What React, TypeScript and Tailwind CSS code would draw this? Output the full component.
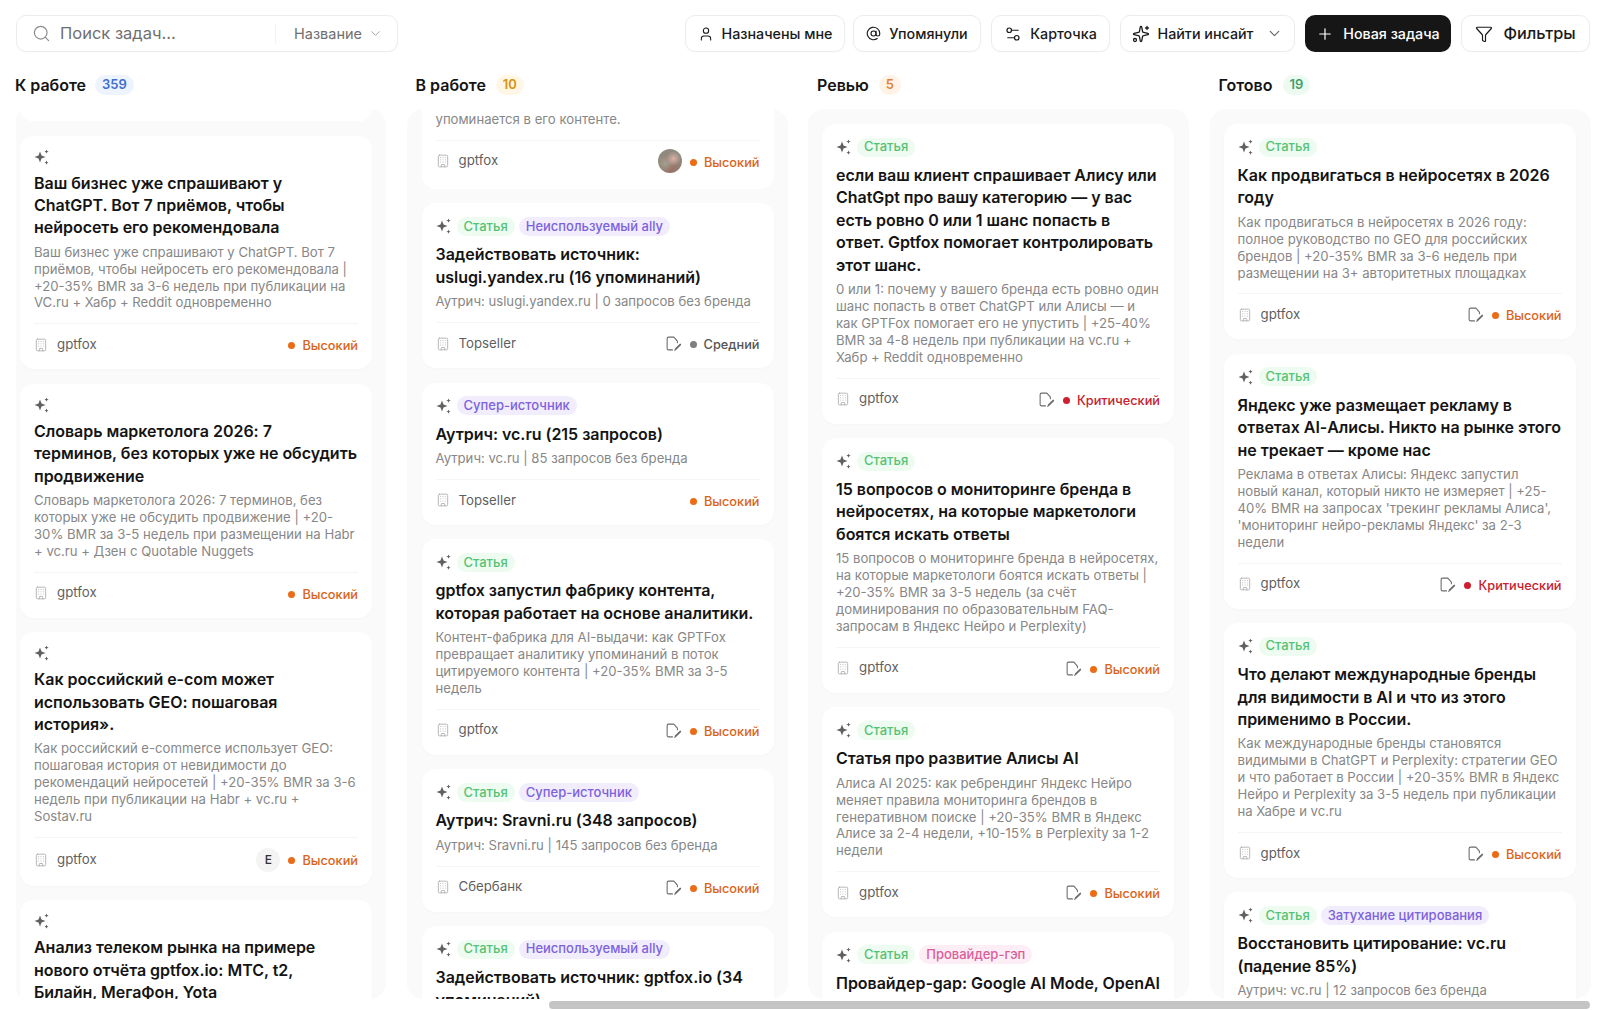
import React from "react";
import { Search, ChevronDown, User, AtSign, Settings2, Sparkles, Plus, Funnel, Building } from "lucide-react";

type P = "h" | "m" | "c";
type Tag = { t: string; k: "g" | "v" | "p" };
type CardT = {
  tags?: Tag[];
  title: string;
  desc: string;
  client: string;
  p: P;
  file?: boolean;
  avatar?: "e" | "photo";
};

const S: Tag = { t: "Статья", k: "g" };

const Spark = () => (
  <svg width="17" height="18" viewBox="1.5 0 17 18" className="shrink-0" fill="#606060">
    <path d="M7.5 3.6 L9 7.6 L13 9.1 L9 10.6 L7.5 14.6 L6 10.6 L2 9.1 L6 7.6 Z" />
    <path d="M14 1.4 L14.6 3 L16.2 3.6 L14.6 4.2 L14 5.8 L13.4 4.2 L11.8 3.6 L13.4 3 Z" />
    <path d="M14 12.6 L14.6 14.1 L16 14.7 L14.6 15.3 L14 16.8 L13.4 15.3 L12 14.7 L13.4 14.1 Z" />
  </svg>
);

const FileEdit = () => (
  <svg width="17" height="17" viewBox="0 0 24 24" fill="none" stroke="#6a6a6a" strokeWidth="1.5" strokeLinecap="round" strokeLinejoin="round" className="shrink-0">
    <path d="M10.5 21H5a2 2 0 0 1-2-2V5a2 2 0 0 1 2-2h7.5l5 5.5V11" />
    <path d="M21.5 13.5 15 20" strokeWidth="2.6" />
    <path d="M13.5 21.5h.5" strokeWidth="1.5" />
  </svg>
);

const tagCls = {
  g: "bg-[#edfbf0] text-[#55c274]",
  v: "bg-[#f1edfd] text-[#7d62dc]",
  p: "bg-[#fdeef5] text-[#d95f9b]",
};

function Pill({ tag }: { tag: Tag }) {
  return (
    <span className={`h-[19px] rounded-full px-[7px] flex items-center text-[13px] font-medium whitespace-nowrap ${tagCls[tag.k]}`}>
      {tag.t}
    </span>
  );
}

function Priority({ p }: { p: P }) {
  const dot = p === "h" ? "bg-[#ea6c17]" : p === "c" ? "bg-[#cf1f2e]" : "bg-[#7f7f7f]";
  const txt = p === "h" ? "text-[#d9651a]" : p === "c" ? "text-[#c5222f]" : "text-[#555555]";
  const label = p === "h" ? "Высокий" : p === "c" ? "Критический" : "Средний";
  return (
    <span className="flex items-center gap-[7px] mt-[2px]">
      <span className={`w-[7px] h-[7px] rounded-full ${dot}`} />
      <span className={`text-[12.75px] font-medium ${txt}`}>{label}</span>
    </span>
  );
}

function Footer({ c }: { c: Pick<CardT, "client" | "p" | "file" | "avatar"> }) {
  return (
    <div className={`mt-[12px] border-t border-[#f5f5f5] pt-[11px] flex items-center justify-between ${c.avatar === "e" ? "h-[34px]" : "h-[31px]"}`}>
      <span className="flex items-center gap-[9px] text-[13.25px] text-[#5f5f5f]">
        <Building size={14} strokeWidth={1.4} className="text-[#a8a8a8]" />
        {c.client}
      </span>
      <span className="flex items-center gap-[8px]">
        {c.file && <FileEdit />}
        {c.avatar === "e" && (
          <span className="w-[24px] h-[24px] rounded-full bg-[#f4f4f4] flex items-center justify-center text-[12px] font-medium text-[#333333]">E</span>
        )}
        {c.avatar === "photo" && (
          <span className="w-[24px] h-[24px] rounded-full bg-[radial-gradient(circle_at_65%_40%,#d9b3a6_0%,transparent_35%),radial-gradient(circle_at_30%_60%,#a3a08f_0%,transparent_40%),radial-gradient(circle_at_50%_85%,#9a6f63_0%,#8f8a7e_70%)]" />
        )}
        <Priority p={c.p} />
      </span>
    </div>
  );
}

function Card({ c }: { c: CardT }) {
  return (
    <div className="bg-white rounded-[14px] shadow-[0_1px_3px_rgba(0,0,0,0.025)] px-[14px] pt-[11px] pb-[15px] shrink-0">
      <div className={`flex items-center gap-[4px] ${c.tags ? "h-[24px]" : "h-[20px]"}`}>
        <Spark />
        {c.tags?.map((t) => <Pill key={t.t} tag={t} />)}
      </div>
      <h3 className="mt-[5px] text-[16px] leading-[22.4px] tracking-[-0.03px] font-semibold text-[#141414]">{c.title}</h3>
      {c.desc && <p className="mt-[5px] text-[13.15px] leading-[16.9px] text-[#878787]">{c.desc}</p>}
      <Footer c={c} />
    </div>
  );
}

const col1: CardT[] = [
  { title: "Ваш бизнес уже спрашивают у ChatGPT. Вот 7 приёмов, чтобы нейросеть его рекомендовала", desc: "Ваш бизнес уже спрашивают у ChatGPT. Вот 7 приёмов, чтобы нейросеть его рекомендовала | +20-35% BMR за 3-6 недель при публикации на VC.ru + Хабр + Reddit одновременно", client: "gptfox", p: "h" },
  { title: "Словарь маркетолога 2026: 7 терминов, без которых уже не обсудить продвижение", desc: "Словарь маркетолога 2026: 7 терминов, без которых уже не обсудить продвижение | +20-30% BMR за 3-5 недель при размещении на Habr + vc.ru + Дзен с Quotable Nuggets", client: "gptfox", p: "h" },
  { title: "Как российский e-com может использовать GEO: пошаговая история».", desc: "Как российский e-commerce использует GEO: пошаговая история от невидимости до рекомендаций нейросетей | +20-35% BMR за 3-6 недель при публикации на Habr + vc.ru + Sostav.ru", client: "gptfox", p: "h", avatar: "e" },
  { title: "Анализ телеком рынка на примере нового отчёта gptfox.io: МТС, t2, Билайн, МегаФон, Yota", desc: "", client: "gptfox", p: "h" },
];

const col2: CardT[] = [
  { tags: [S, { t: "Неиспользуемый ally", k: "v" }], title: "Задействовать источник: uslugi.yandex.ru (16 упоминаний)", desc: "Аутрич: uslugi.yandex.ru | 0 запросов без бренда", client: "Topseller", p: "m", file: true },
  { tags: [{ t: "Супер-источник", k: "v" }], title: "Аутрич: vc.ru (215 запросов)", desc: "Аутрич: vc.ru | 85 запросов без бренда", client: "Topseller", p: "h" },
  { tags: [S], title: "gptfox запустил фабрику контента, которая работает на основе аналитики.", desc: "Контент-фабрика для AI-выдачи: как GPTFox превращает аналитику упоминаний в поток цитируемого контента | +20-35% BMR за 3-5 недель", client: "gptfox", p: "h", file: true },
  { tags: [S, { t: "Супер-источник", k: "v" }], title: "Аутрич: Sravni.ru (348 запросов)", desc: "Аутрич: Sravni.ru | 145 запросов без бренда", client: "Сбербанк", p: "h", file: true },
  { tags: [S, { t: "Неиспользуемый ally", k: "v" }], title: "Задействовать источник: gptfox.io (34 упоминаний)", desc: "", client: "gptfox", p: "h", file: true },
];

const col3: CardT[] = [
  { tags: [S], title: "если ваш клиент спрашивает Алису или ChatGpt про вашу категорию — у вас есть ровно 0 или 1 шанс попасть в ответ. Gptfox помогает контролировать этот шанс.", desc: "0 или 1: почему у вашего бренда есть ровно один шанс попасть в ответ ChatGPT или Алисы — и как GPTFox помогает его не упустить | +25-40% BMR за 4-8 недель при публикации на vc.ru + Хабр + Reddit одновременно", client: "gptfox", p: "c", file: true },
  { tags: [S], title: "15 вопросов о мониторинге бренда в нейросетях, на которые маркетологи боятся искать ответы", desc: "15 вопросов о мониторинге бренда в нейросетях, на которые маркетологи боятся искать ответы | +20-35% BMR за 3-5 недель (за счёт доминирования по образовательным FAQ-запросам в Яндекс Нейро и Perplexity)", client: "gptfox", p: "h", file: true },
  { tags: [S], title: "Статья про развитие Алисы AI", desc: "Алиса AI 2025: как ребрендинг Яндекс Нейро меняет правила мониторинга брендов в генеративном поиске | +20-35% BMR в Яндекс Алисе за 2-4 недели, +10-15% в Perplexity за 1-2 недели", client: "gptfox", p: "h", file: true },
  { tags: [S, { t: "Провайдер-гэп", k: "p" }], title: "Провайдер-gap: Google AI Mode, OpenAI", desc: "", client: "gptfox", p: "h" },
];

const col4: CardT[] = [
  { tags: [S], title: "Как продвигаться в нейросетях в 2026 году", desc: "Как продвигаться в нейросетях в 2026 году: полное руководство по GEO для российских брендов | +20-35% BMR за 3-6 недель при размещении на 3+ авторитетных площадках", client: "gptfox", p: "h", file: true },
  { tags: [S], title: "Яндекс уже размещает рекламу в ответах AI-Алисы. Никто на рынке этого не трекает — кроме нас", desc: "Реклама в ответах Алисы: Яндекс запустил новый канал, который никто не измеряет | +25-40% BMR на запросах 'трекинг рекламы Алиса', 'мониторинг нейро-рекламы Яндекс' за 2-3 недели", client: "gptfox", p: "c", file: true },
  { tags: [S], title: "Что делают международные бренды для видимости в AI и что из этого применимо в России.", desc: "Как международные бренды становятся видимыми в ChatGPT и Perplexity: стратегии GEO и что работает в России | +20-35% BMR в Яндекс Нейро и Perplexity за 3-5 недель при публикации на Хабре и vc.ru", client: "gptfox", p: "h", file: true },
  { tags: [S, { t: "Затухание цитирования", k: "v" }], title: "Восстановить цитирование: vc.ru (падение 85%)", desc: "Аутрич: vc.ru | 12 запросов без бренда", client: "gptfox", p: "h" },
];

function Btn({ children, cls }: { children: React.ReactNode; cls: string }) {
  return (
    <button className={`h-[37px] rounded-[10px] border border-[#ececec] bg-white flex items-center justify-center font-medium text-[#1a1a1a] shadow-[0_1px_2px_rgba(0,0,0,0.02)] ${cls}`}>
      {children}
    </button>
  );
}

function Head({ title, n, cls }: { title: string; n: number; cls: string }) {
  return (
    <div className="h-[34px] flex items-start gap-[9px] shrink-0">
      <span className="text-[16px] leading-[20px] font-semibold text-[#141414]">{title}</span>
      <span className={`h-[20px] rounded-full px-[7px] flex items-center text-[13px] font-semibold ${cls}`}>{n}</span>
    </div>
  );
}

export default function App() {
  return (
    <div className="w-[1600px] h-[1010px] overflow-hidden bg-white font-['Inter','Noto_Sans',sans-serif]">
      <header className="flex items-center justify-between pl-[16px] pr-[10px] pt-[15px] h-[52px]">
        <div className="w-[382px] h-[37px] rounded-[10px] border border-[#ececec] bg-white flex items-center pl-[15px] pr-[14px] shadow-[0_1px_2px_rgba(0,0,0,0.02)]">
          <Search size={19} strokeWidth={1.5} className="text-[#8d8d8d]" />
          <span className="ml-[9px] text-[16.5px] text-[#6f6f6f]">Поиск задач...</span>
          <span className="ml-auto w-px h-[20px] bg-[#f3f3f3]" />
          <span className="ml-[18px] text-[14.5px] text-[#6f6f6f]">Название</span>
          <ChevronDown size={15} strokeWidth={1.5} className="ml-[6px] text-[#a0a0a0]" />
        </div>
        <div className="flex items-center">
          <Btn cls="w-[160px] gap-[8px] text-[14.3px]"><User size={16} strokeWidth={1.6} />Назначены мне</Btn>
          <Btn cls="w-[128px] ml-[8px] gap-[8px] text-[14.3px]"><AtSign size={15} strokeWidth={1.8} />Упомянули</Btn>
          <Btn cls="w-[119px] ml-[10px] gap-[8px] text-[14.3px]"><Settings2 size={18} strokeWidth={1.6} />Карточка</Btn>
          <Btn cls="w-[175px] ml-[10px] gap-[7px] text-[14.3px]"><Sparkles size={18} strokeWidth={1.7} />Найти инсайт<ChevronDown size={17} strokeWidth={1.6} className="ml-[5px] text-[#666666]" /></Btn>
          <button className="w-[146px] ml-[10px] h-[37px] rounded-[10px] bg-[#161616] text-white flex items-center justify-center gap-[9px] text-[14.3px] font-medium">
            <Plus size={18} strokeWidth={1.6} />Новая задача
          </button>
          <Btn cls="w-[129px] ml-[10px] gap-[10px] text-[16.3px]"><Funnel size={18} strokeWidth={1.6} />Фильтры</Btn>
        </div>
      </header>

      <div className="ml-[15px] mt-[23px] flex gap-[20.5px] overflow-hidden">
        <section className="w-[371px] shrink-0 flex flex-col">
          <Head title="К работе" n={359} cls="bg-[#eef4fe] text-[#3f6fd0]" />
          <div className="h-[890px] overflow-hidden rounded-r-[16px] rounded-l-[10px] ml-px bg-[#fafafa] pl-[4px] pr-[14px] flex flex-col gap-[14.5px]">
            <div className="h-[12px] shrink-0 bg-white rounded-b-[14px]" />
            {col1.map((c) => <Card key={c.title} c={c} />)}
          </div>
        </section>

        <section className="w-[381px] shrink-0 flex flex-col">
          <div className="pl-[9px]"><Head title="В работе" n={10} cls="ml-[1px] bg-[#fff6e6] text-[#d8930f]" /></div>
          <div className="h-[890px] overflow-hidden rounded-[16px] bg-[#fafafa] pl-[15px] pr-[14px] flex flex-col gap-[14.5px]">
            <div className="shrink-0 bg-white rounded-b-[14px] px-[14px] pt-[2px] pb-[18px]">
              <p className="text-[13.15px] leading-[16.9px] text-[#878787]">упоминается в его контенте.</p>
              <Footer c={{ client: "gptfox", p: "h", avatar: "photo" }} />
            </div>
            {col2.map((c) => <Card key={c.title} c={c} />)}
          </div>
        </section>

        <section className="w-[381px] shrink-0 flex flex-col">
          <div className="pl-[9px]"><Head title="Ревью" n={5} cls="ml-[1px] bg-[#fff3e8] text-[#dd8433]" /></div>
          <div className="h-[890px] overflow-hidden rounded-[16px] bg-[#fafafa] pt-[15px] pl-[14px] pr-[15px] flex flex-col gap-[14.5px]">
            {col3.map((c) => <Card key={c.title} c={c} />)}
          </div>
        </section>

        <section className="w-[381px] shrink-0 flex flex-col">
          <div className="pl-[9px]"><Head title="Готово" n={19} cls="ml-[1px] bg-[#ecfaf1] text-[#3f9e6b]" /></div>
          <div className="h-[890px] overflow-hidden rounded-[16px] bg-[#fafafa] pt-[15px] pl-[14px] pr-[15px] flex flex-col gap-[14.5px]">
            {col4.map((c) => <Card key={c.title} c={c} />)}
          </div>
        </section>
      </div>

      <div className="mt-[2px] ml-[549px] w-[1041px] h-[8px] rounded-full bg-[#c4c4c4]" />
    </div>
  );
}
